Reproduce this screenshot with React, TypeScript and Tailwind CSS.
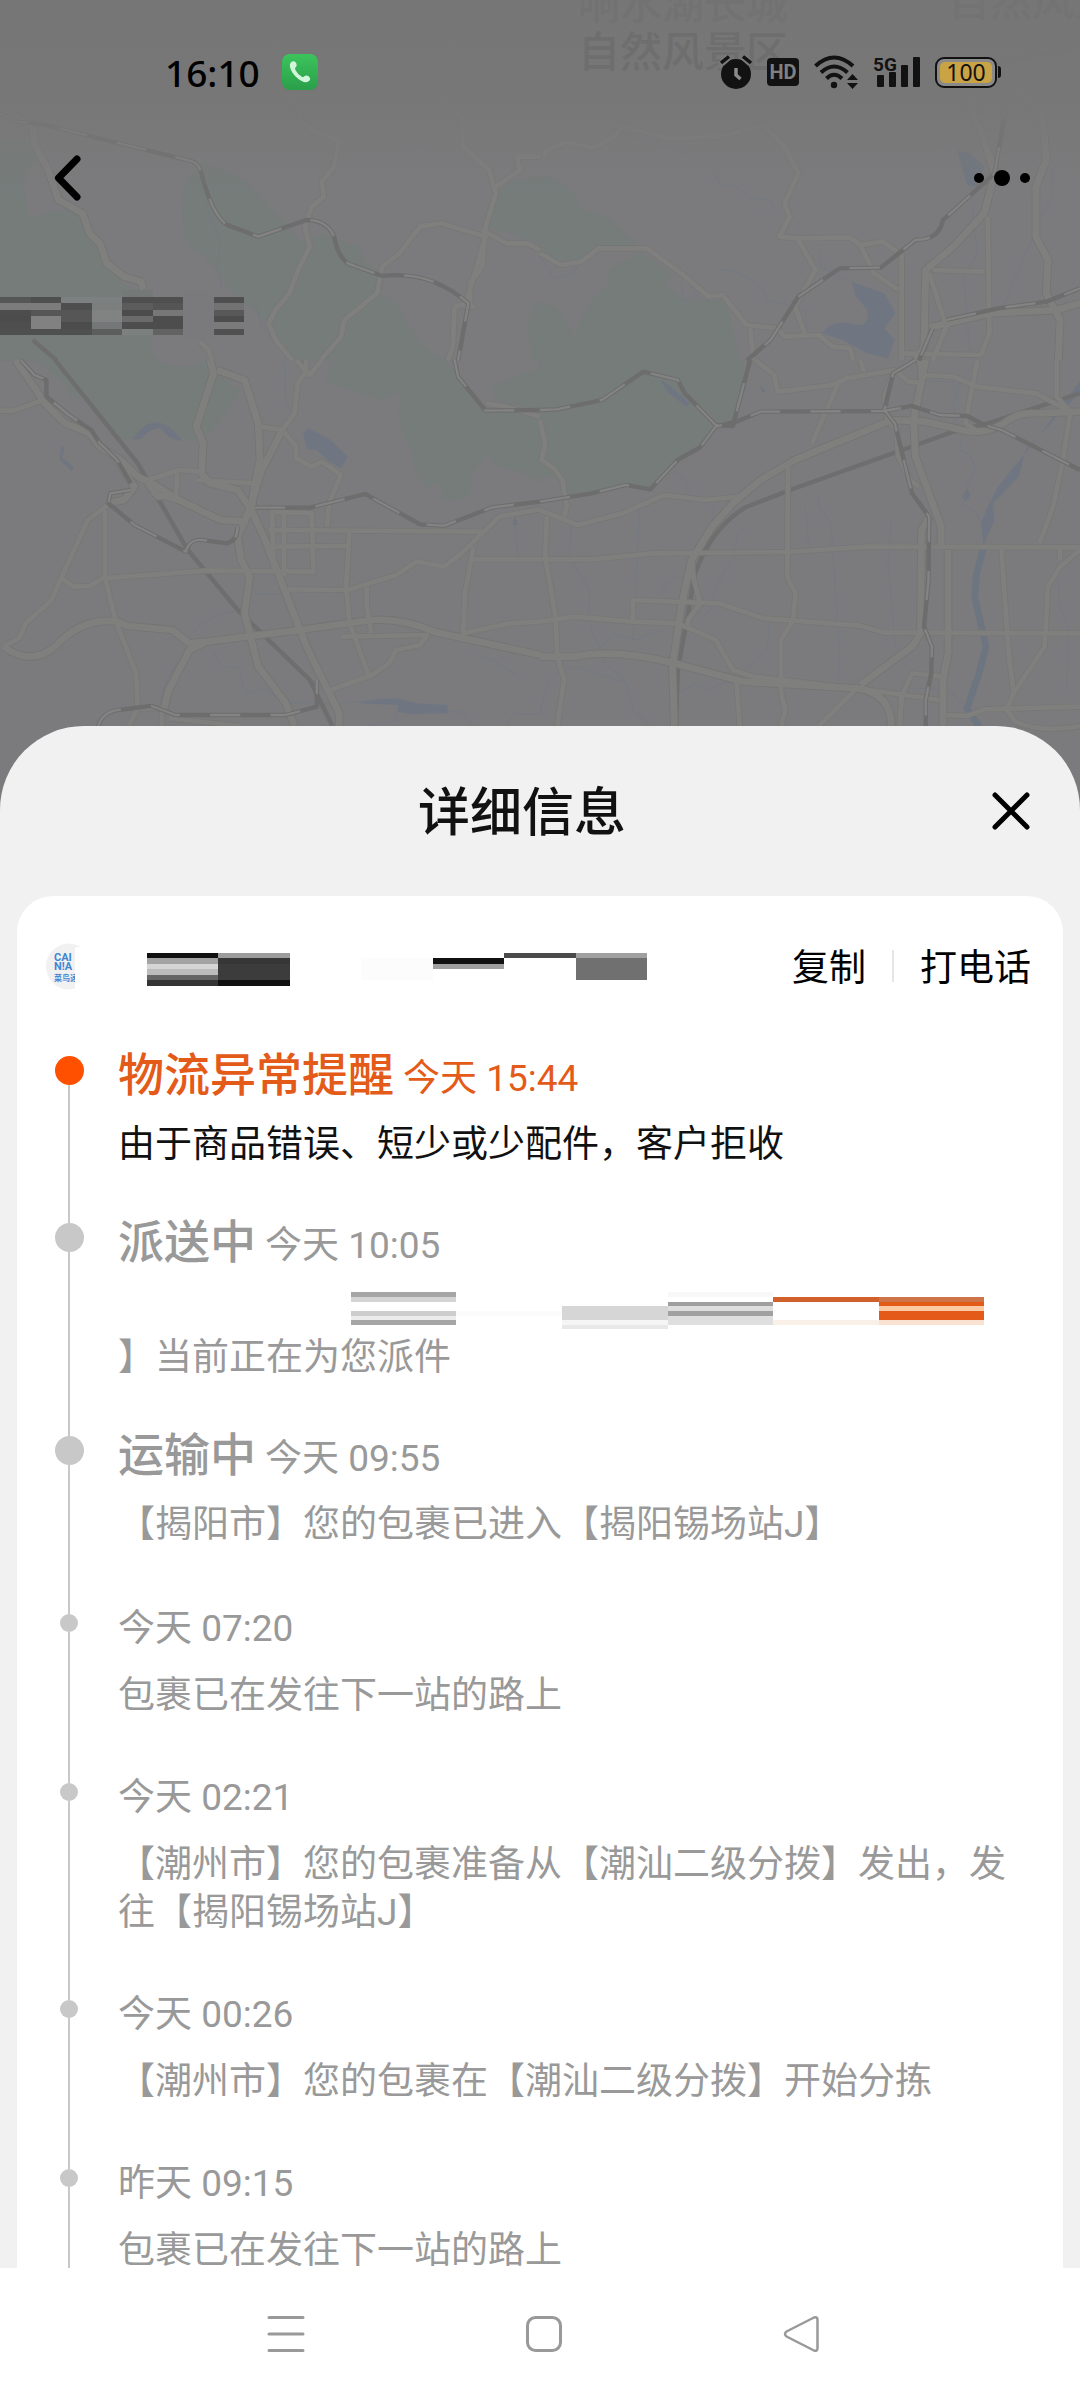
import type { ReactNode } from "react";

/* ---------- Map backdrop ---------- */

type Tile = {
  transform: string;
  parks: string[];
  lakes: string[];
  streams: string[];
  rivers: string[];
  minor: string[];
  major: string[];
  lines: string[];
  rails: string[];
};

const tiles: Tile[] = [
  {
    transform: "scale(0.3444 0.3333)",
    parks: [
      "M0 415Q60 410 100 440L110 480Q60 520 75 600Q80 670 110 650Q190 610 245 650L265 720L310 790L355 850L400 870L445 900L445 1010Q430 1060 460 1082L0 1082Z",
      "M530 600Q525 560 585 490Q700 520 740 570L800 640L870 720L900 720L940 700Q1020 740 1040 735L1060 780L1110 830L1100 880Q1150 900 1180 960Q1220 1040 1290 1082L860 1082L780 970L700 900L660 860Q610 780 580 760Q520 740 530 600Z",
      "M1570 530Q1450 530 1440 600L1410 680L1570 730Z",
      "M1570 900Q1530 920 1535 1000L1545 1082L1570 1082Z",
    ],
    lakes: [],
    streams: ["M595 610L640 720L630 800L645 870", "M1180 410L1200 450L1280 410", "M710 910L745 920L760 980L820 1050L830 1080"],
    rivers: [],
    minor: [
      "M790 90L800 200L820 290L865 320L870 350L905 390L985 420L970 500L935 545L940 590L905 620L885 680L900 740L870 800L840 880L800 930L780 970L800 1020L850 1082",
      "M1325 90L1300 180L1265 220L1270 290L1340 350L1345 440L1420 510L1440 580L1410 680L1400 800L1365 850L1365 910L1320 920L1315 1040L1300 1082",
      "M1568 470L1500 470L1510 510L1440 560",
      "M1380 920L1350 920L1410 710L1280 670L1220 680L1160 760L1110 800L1095 880L1000 960L990 1010L930 1082",
      "M1400 690L1470 730L1530 730L1568 750",
      "M580 1025L605 1050L615 1082",
    ],
    major: ["M0 320L95 380L100 430L140 510L170 600L240 640L260 700L290 730L310 790L360 830L410 845L415 870"],
    lines: ["M95 1020L165 1082"],
    rails: [
      "M0 340L50 365L120 372L550 482Q580 485 590 540Q620 650 660 675L750 710L890 660Q950 660 970 710Q985 790 1030 798L1110 828Q1250 810 1360 910L1330 1082",
    ],
  },
  {
    transform: "translate(540 0) scale(0.3444 0.3333)",
    parks: [
      "M0 525Q60 530 110 600Q120 640 200 650L280 730L270 750L200 745L130 770L60 800L0 760Z",
      "M290 755L310 770L385 820L360 850L420 900L490 900L540 905L560 980L580 1082L-2 1082L-2 915Q40 900 60 940L100 1010Q110 960 150 900L200 850Q180 800 250 780Z",
    ],
    lakes: [
      "M905 845L1000 880L1032 940L1000 985L1030 1020L1010 1075L950 1060L880 1020L820 1000Q840 960 900 970Q960 990 950 930L915 885Z",
      "M1210 450L1250 460L1290 500L1270 560L1240 555Z",
    ],
    streams: [
      "M240 400L380 440L500 500L520 550L570 560L610 595L670 600Q690 640 650 640",
      "M1120 410L1140 395L1190 460",
      "M1490 480L1485 600L1450 660L1345 920",
      "M520 810Q560 800 640 860L660 900L770 930L775 1000L830 1000",
      "M1255 620L1270 760L1230 830L1250 1080",
      "M0 770L40 835L90 825L130 770",
      "M810 730L815 800L905 845",
      "M410 840L415 900L440 900L450 880L490 905",
    ],
    rivers: [],
    minor: [
      "M10 470L20 450L80 425L150 445L210 415L240 380L370 415L520 410L650 375L710 440L750 520L710 610L725 650L695 710L750 715L900 712L930 735L995 725L1050 765L1050 1082",
      "M750 720L800 810L740 920L770 1005",
      "M0 760L60 795L120 785L170 745L310 745L410 820L490 890L530 885L600 975L690 985L710 1010L810 1005L850 1040L900 1045L910 1082",
      "M930 735L970 820L1040 870",
      "M610 985L620 1082",
      "M1140 810L1290 815",
      "M1130 980L1180 970",
      "M1050 1060L1280 1065L1305 1000L1300 650",
      "M1140 1082L1180 980L1130 820",
    ],
    major: [
      "M1255 270Q1240 330 1280 390L1320 520L1290 640L1200 740L1120 810L1115 1040L1090 1082",
      "M1350 260Q1440 290 1460 350L1470 480L1440 560L1440 710L1475 780L1470 880L1510 960L1505 1082",
      "M1140 980L1310 940L1500 930L1568 910",
    ],
    lines: ["M1350 185L1550 145"],
    rails: [
      "M1330 270L1350 340L1320 520L1170 660Q1160 720 1090 720L990 803L870 805L750 890L670 1020L600 1082",
      "M1180 960L1330 925L1470 905L1568 865",
      "M1140 985L1100 1082",
    ],
  },
  {
    transform: "translate(0 360) scale(0.3444 0.3333)",
    parks: [
      "M90 -2L445 -2Q520 40 600 0L620 40L700 90Q640 200 590 230L560 240Q530 245 510 215Q450 160 390 235L360 240Q300 190 240 115L205 110L180 60Z",
      "M965 -2L1290 -2L1330 40L1400 140L1570 150V370L1500 330Q1430 330 1415 280Q1395 310 1370 340L1365 400Q1320 440 1285 415L1280 370Q1250 370 1240 390Q1200 340 1190 260Q1150 200 1160 100L1110 120L945 65Z",
      "M1570 20L1425 80L1440 120L1570 150Z",
    ],
    lakes: [
      "M385 238Q450 135 530 243Q490 240 465 205Q430 205 410 238Z",
      "M880 220L895 205L960 240L1010 290L990 325L950 300L920 270L890 268Z",
      "M178 255Q195 270 178 290L215 322L208 334L172 298Z",
      "M1040 1030L1090 1018L1150 1015L1210 1030L1300 1035V1060L1190 1062L1155 1055V1035Z",
      "M1495 470L1505 495L1488 495Z",
    ],
    streams: [
      "M615 870L645 920L695 920L705 980L725 1000L760 985L800 1010",
      "M840 1028L1000 1028L1100 1020",
      "M1155 1050L1150 1080L1080 1098",
      "M1300 1055L1340 1055L1375 1098",
      "M1470 1095L1495 1062L1568 1062",
      "M1495 495L1505 590",
      "M560 820Q590 770 680 755",
      "M530 890Q470 960 465 1040",
      "M1380 885L1430 900L1500 945",
      "M740 703L820 703",
      "M825 0L830 130L850 160",
    ],
    rivers: [],
    minor: [
      "M0 152L40 152L120 122",
      "M890 0L885 40L865 70L855 160L820 210L755 200",
      "M860 0L900 45L935 0",
      "M820 210L860 260L860 295L905 320L935 305L990 345L955 430L950 500",
      "M320 430L255 480L180 650L150 720L75 790L55 835L10 860",
      "M305 450L305 650L335 780L395 940L400 1040L375 1098",
      "M180 655L215 680L260 678L300 655L600 632L910 635L905 460L790 455L795 640",
      "M825 460V650",
      "M780 510L1400 515",
      "M800 560L1010 558",
      "M1015 510L1005 680L1015 790L1070 945",
      "M835 688L1010 690L1150 645L1210 605L1290 620L1340 580L1450 470L1568 448",
      "M1370 598L1568 598",
      "M1375 560L1350 700L1345 820L1480 790L1568 785",
      "M1065 680L1065 740L1078 820",
      "M990 830L1240 825L1220 855L1150 870L1130 910L1080 945L960 990",
      "M515 340L510 420L440 400",
      "M430 360L520 330L580 335",
      "M570 360L740 370",
      "M1410 130L1470 140L1568 170",
      "M400 1045L480 1045",
      "M470 1050L470 1098",
      "M490 1075L700 1098",
    ],
    major: [
      "M45 0L105 90L130 130L190 190L260 220L290 260L350 300L400 350L450 375L510 415L640 480L720 485",
      "M610 0L620 40L570 200L590 250L585 340L610 370L690 390L730 450L770 540L860 780L890 860L985 1060V1098",
      "M630 30L710 60L750 190L755 300L735 400L730 470",
      "M820 210L760 330L720 460L690 530L700 600L725 650L710 760L725 820L750 920L830 1030L855 1098",
      "M340 300L390 380L360 420L310 430",
      "M10 860Q90 920 160 860Q240 770 340 785L370 798L500 810L550 850L600 845L870 810L1080 780Q1170 775 1260 815L1568 885",
      "M600 845L550 870L490 990L475 1050",
      "M430 370L460 410L500 405",
    ],
    lines: ["M160 0L400 310L545 570L690 750L900 960L965 1098"],
    rails: [
      "M60 0L100 45L135 60L135 110L200 165L265 210L290 250L340 300L380 370",
      "M740 443L900 443L1060 402L1220 493L1290 497L1430 442L1568 425",
      "M380 390L320 400L315 430L390 495L540 575Q550 530 600 542L660 550Q690 540 690 500",
      "M285 1098Q300 1050 360 1048L440 1038L510 1065L830 1065L920 1040L920 960",
      "M1320 0L1330 50L1410 152L1568 150",
    ],
  },
  {
    transform: "translate(540 360) scale(0.3444 0.3333)",
    parks: [
      "M-2 -2L585 -2L600 80L565 180L510 200L460 260L400 300L310 385L240 370L150 400L80 405L65 360L-2 345Z",
    ],
    lakes: [
      "M1570 60L1440 240L1330 380L1300 440L1280 490L1288 555L1320 480L1315 430L1390 350L1410 270L1520 150L1570 95Z",
      "M350 60L380 80L435 130L425 140L370 95Z",
      "M640 75L655 95L645 98Z",
      "M1240 385L1250 405L1235 425L1225 410Z",
    ],
    streams: [
      "M90 500L85 590L145 690L140 780L170 860L180 900L250 970L270 1050L320 1098",
      "M0 1060L25 960L80 920L140 930L250 970",
      "M290 430L270 830",
      "M805 400L810 440L845 490L870 880L865 965",
      "M600 500Q560 520 570 580L510 680L500 740L470 780",
      "M1020 480L1010 600L1030 850L1060 920",
      "M665 790L660 870L600 930",
      "M350 700Q370 650 430 650",
      "M170 870L210 820L280 840L350 810",
      "M400 1000L450 970L480 990L560 960",
      "M1225 220L1220 270Q1270 290 1260 340L1240 380L1230 430L1270 465L1285 490",
      "M1120 63L1200 65L1205 190",
      "M1250 30L1210 80L1210 130",
      "M1180 980L1240 1050",
      "M1080 985L1170 985",
      "M1505 660L1510 740L1535 800L1530 1000",
      "M770 440L780 560",
      "M390 330L430 370V400",
      "M505 430L500 480",
    ],
    rivers: ["M1290 555L1268 640L1262 710L1282 800L1295 860L1275 940L1240 1045L1275 1100"],
    minor: [
      "M0 180L15 250L5 300L40 325L65 360L78 440L70 470",
      "M0 450L110 495L240 460L360 405L480 420L580 410L620 380",
      "M20 470L15 590L45 770L50 890L70 960L50 1098",
      "M0 598L150 598L330 580L720 576L950 560L1568 562",
      "M0 785L100 770L270 785L400 790L510 840L560 930L620 950L910 985",
      "M270 785V720L520 730L650 775L930 797L1000 818L1568 820",
      "M720 310L718 650L742 700L735 780L700 840L700 1000L712 1050L700 1098",
      "M570 950L580 1098",
      "M625 0L680 45L690 95L850 75L890 55L1030 30L1070 65L1100 68",
      "M870 60L790 250",
      "M930 0L940 35",
      "M1120 45L1200 50L1270 80L1440 100L1540 155",
      "M1270 0L1235 190L1270 215",
      "M1500 0L1500 110L1540 155L1520 290L1490 440L1450 550",
      "M1340 565L1360 870L1375 1000L1355 1050L1380 1085Q1450 1120 1568 1098",
      "M1568 570L1510 620L1475 680L1465 860L1375 1000",
      "M1510 562V600",
      "M1180 1065L1240 1068L1290 1048L1568 1040",
      "M1025 40L1000 110L1010 180L1035 210L1040 290L1075 360L1100 380",
      "M1160 1020L920 985L810 1098",
      "M1045 1098L1050 1010L1080 940L1170 950",
      "M440 580L445 650L465 730L430 780L430 800",
    ],
    major: [
      "M390 1098L385 920L410 740L440 600L500 500L560 430L640 360L740 300L820 265L940 215L1020 180L1120 185L1250 215Q1310 220 1360 180Q1400 155 1440 160L1568 155",
      "M0 890L100 890Q220 865 390 910L590 965L920 985Q1020 1000 1020 1098",
      "M1120 0L1085 180L1090 290L1140 430L1165 500V560",
      "M1105 0L1110 60",
      "M1130 470L1108 510L1105 820L1080 860L930 975",
      "M1185 570V880L1170 960V1098",
    ],
    lines: ["M1568 100L1300 190L1200 215L740 385L600 440Q500 500 450 640L430 760L400 930L395 1098"],
    rails: [
      "M0 150L50 148L180 120L300 35L400 60L420 100L510 195L560 198L610 0",
      "M0 425L150 400L250 375L320 388L400 300L465 262L510 200L570 185L640 155L1000 153L1080 138L1160 165L1240 168L1290 195L1340 210L1568 330",
      "M1090 0L1025 40L1000 150L1030 190L1080 400L1130 470L1128 660L1115 800L1138 860L1136 940L1120 1020V1098",
    ],
  },
];

function MapBackdrop() {
  const layer = (key: keyof Tile, props: Record<string, string | number>) =>
    tiles.map((t) => (
      <g key={t.transform} transform={t.transform} {...props}>
        {(t[key] as string[]).map((d) => (
          <path key={d} d={d} />
        ))}
      </g>
    ));
  const line = { fill: "none", strokeLinejoin: "round", strokeLinecap: "butt" };
  return (
    <svg
      aria-hidden="true"
      className="absolute inset-x-0 top-0 h-[820px] w-full"
      viewBox="0 0 1080 820"
      preserveAspectRatio="xMidYMin slice"
    >
      <defs>
        <linearGradient id="topFade" x1="0" y1="0" x2="0" y2="1">
          <stop offset="0" stopColor="#767676" />
          <stop offset="0.55" stopColor="#777777" stopOpacity="0.9" />
          <stop offset="1" stopColor="#7a7a7b" stopOpacity="0" />
        </linearGradient>
      </defs>
      <rect width="1080" height="820" fill="#7b7b7d" />
      {layer("parks", { fill: "#757c7a" })}
      {layer("lakes", { fill: "#6f7681" })}
      {layer("streams", { ...line, stroke: "#747982", strokeWidth: 3 })}
      {layer("rivers", { ...line, stroke: "#6d7680", strokeWidth: 20 })}
      {layer("lines", { ...line, stroke: "#6e6e6e", strokeWidth: 13 })}
      {layer("minor", { ...line, stroke: "#767676", strokeWidth: 18 })}
      {layer("major", { ...line, stroke: "#747474", strokeWidth: 25 })}
      {layer("minor", { ...line, stroke: "#7f7f7e", strokeWidth: 14 })}
      {layer("major", { ...line, stroke: "#7f7f7e", strokeWidth: 20 })}
      {layer("rails", { ...line, stroke: "#6d6d6d", strokeWidth: 13 })}
      {layer("rails", { ...line, stroke: "#838383", strokeWidth: 7, strokeDasharray: "88 88" })}
      <rect width="1080" height="200" fill="url(#topFade)" />
      <g fontFamily='"Noto Sans CJK SC", sans-serif' fontSize="42" fontWeight="500">
        <text x="578" y="19" fill="#727272">响水湖长城</text>
        <text x="578" y="67" fill="#6e6e6e">自然风景区</text>
        <text x="948" y="16" fill="#737373">自然风景</text>
      </g>
      <Pixels
        blocks={[
          [122, 290, 31, 7, "#747978"],
          [0, 297, 31, 6, "#565656"], [31, 297, 30, 6, "#4f4f4f"], [61, 297, 61, 6, "#7d8080"], [122, 297, 61, 6, "#4f4f4f"], [214, 297, 30, 6, "#4f4f4f"],
          [0, 303, 61, 7, "#7c7c7c"], [61, 303, 31, 7, "#4e4e4e"], [92, 303, 30, 7, "#7a7f7e"], [122, 303, 31, 7, "#5c5c5c"], [153, 303, 30, 7, "#555555"], [214, 303, 30, 7, "#727272"],
          [0, 310, 31, 6, "#4d4d4d"], [31, 310, 61, 6, "#565656"], [92, 310, 30, 6, "#818383"], [122, 310, 31, 6, "#4c4c4c"], [153, 310, 30, 6, "#777777"], [214, 310, 30, 6, "#585858"],
          [0, 316, 31, 6, "#4c4c4c"], [31, 316, 30, 6, "#818181"], [61, 316, 31, 6, "#565656"], [92, 316, 30, 6, "#818383"], [122, 316, 31, 6, "#6b6b6b"], [153, 316, 30, 6, "#4d4d4d"], [214, 316, 30, 6, "#4c4c4c"],
          [0, 322, 31, 7, "#4e4e4e"], [31, 322, 30, 7, "#818181"], [61, 322, 31, 7, "#4c4c4c"], [92, 322, 30, 7, "#747777"], [122, 322, 61, 7, "#4d4d4d"], [214, 322, 30, 7, "#7a7a7a"],
          [0, 329, 92, 6, "#4f4f4f"], [92, 329, 30, 6, "#5b5e5d"], [122, 329, 31, 6, "#7c8180"], [153, 329, 30, 6, "#626262"], [214, 329, 30, 6, "#505050"],
          [183, 290, 31, 50, "#7a7a7d"],
        ]}
      />
    </svg>
  );
}

type Block = [x: number, y: number, width: number, height: number, fill: string];

function Pixels({ blocks }: { blocks: Block[] }) {
  return (
    <g shapeRendering="crispEdges">
      {blocks.map(([x, y, width, height, fill]) => (
        <rect key={`${x}-${y}`} x={x} y={y} width={width} height={height} fill={fill} />
      ))}
    </g>
  );
}

/* ---------- Status bar ---------- */

function StatusBar() {
  return (
    <div className="relative flex h-36 items-center justify-between pr-[79px] pl-[165px]">
      <div className="flex items-center gap-[22px]">
        <time className="font-['Noto_Sans',sans-serif] text-[37px] leading-none font-medium text-black">16:10</time>
        <svg viewBox="0 0 36 36" className="size-9" aria-label="通话">
          <defs>
            <linearGradient id="callGreen" x1="0" y1="0" x2="0" y2="1">
              <stop offset="0" stopColor="#3cc45c" />
              <stop offset="1" stopColor="#2a9f49" />
            </linearGradient>
          </defs>
          <rect width="36" height="36" rx="8" fill="url(#callGreen)" />
          <path
            d="M9.500 7.800Q12 6.200 13.800 8.600Q15.800 11.600 13.400 13.600Q12.600 14.600 13.400 16Q15.600 20.200 19.800 22.800Q21 23.600 22 22.600Q24.400 20.600 27 22.600Q29 24.600 27.400 26.800Q24.600 29.600 19.600 27Q12.400 23.200 9 16Q6.400 10.400 9.500 7.800Z"
            fill="#d3f5dc"
          />
        </svg>
      </div>
      <div className="flex items-center gap-[15px] text-[#121212]">
        <svg viewBox="0 0 32 34" className="h-[34px] w-8" aria-label="闹钟">
          <circle cx="16" cy="19" r="15" fill="currentColor" />
          <path d="M1.500 8L9 1.500M30.500 8L23 1.500" stroke="#7a7a7a" strokeWidth="7" />
          <path d="M1 8L9 1.500M31 8L23 1.500" stroke="currentColor" strokeWidth="3.500" />
          <path d="M16 13V20L20.500 24" stroke="#8a8a8a" strokeWidth="3.500" fill="none" />
        </svg>
        <span className="flex h-7 w-8 items-center justify-center rounded bg-[#121212] font-[Roboto,sans-serif] text-[20px] leading-none font-bold text-[#808080]">
          HD
        </span>
        <svg viewBox="0 0 44 34" className="h-[34px] w-11" aria-label="无线网络">
          <g fill="none" stroke="currentColor" strokeWidth="4">
            <path d="M1.500 11Q20 -6 39 11" />
            <path d="M7 17.500Q20 5.500 33.500 17.500" />
            <path d="M12.500 23.500Q20 16 28 23.500" />
          </g>
          <circle cx="20" cy="30" r="3.200" fill="currentColor" />
          <path d="M33 25L38.500 19L44 25ZM33 28H44L38.500 34Z" fill="currentColor" />
        </svg>
        <svg viewBox="0 0 47 34" className="h-[34px] w-[47px]" aria-label="5G信号">
          <text x="0" y="16" fontFamily="Roboto, sans-serif" fontSize="19" fontWeight="700" fill="currentColor">
            5G
          </text>
          <g fill="currentColor">
            <rect x="4" y="20" width="7" height="12" rx="1" />
            <rect x="16" y="17" width="7" height="15" rx="1" />
            <rect x="28" y="10" width="7" height="22" rx="1" />
            <rect x="40" y="2" width="7" height="30" rx="1" />
          </g>
        </svg>
        <div className="flex items-center gap-px">
          <div className="rounded-[9px] border-2 border-[#121212] bg-[#8a8a8a] p-[3px]">
            <div className="flex h-[21px] w-[52px] items-center justify-center rounded-[5px] bg-[#c9a344] font-['Noto_Sans',sans-serif] text-[23px] leading-none text-[#121212]">
              100
            </div>
          </div>
          <div className="h-3 w-[3px] rounded-r bg-[#121212]" />
        </div>
      </div>
    </div>
  );
}

/* ---------- Timeline ---------- */

type Entry = {
  status?: string;
  time: string;
  lines: ReactNode;
  active?: boolean;
  endOfStage?: boolean;
};

const hiddenAddress = (
  <svg viewBox="0 0 912 46" className="block h-[46px] w-full" preserveAspectRatio="xMinYMin meet" aria-label="已隐藏的内容">
    <Pixels
      blocks={[
        [233, 4, 105, 5, "#a6a6a6"], [233, 9, 105, 5, "#d4d4d4"], [233, 23, 105, 5, "#cdcdcd"], [233, 28, 105, 4, "#ececec"], [233, 32, 105, 5, "#a6a6a6"],
        [338, 23, 106, 5, "#fbfbfb"],
        [444, 18, 106, 14, "#d6d6d6"], [444, 32, 106, 5, "#f5f5f5"], [444, 37, 106, 4, "#e8e8e8"],
        [550, 4, 105, 5, "#f8f8f8"], [550, 14, 105, 4, "#9f9f9f"], [550, 18, 105, 5, "#dedede"], [550, 23, 105, 5, "#a1a1a1"], [550, 28, 105, 9, "#dfdfdf"],
        [655, 9, 106, 5, "#d1602a"], [655, 32, 106, 5, "#f9f0e8"],
        [761, 9, 105, 5, "#cd7548"], [761, 14, 105, 4, "#e35a19"], [761, 18, 105, 5, "#fbc9a4"], [761, 23, 105, 9, "#e35a19"], [761, 32, 105, 5, "#f9e2d2"],
      ]}
    />
  </svg>
);

const entries: Entry[] = [
  { status: "物流异常提醒", time: "今天 15:44", lines: "由于商品错误、短少或少配件，客户拒收", active: true },
  {
    status: "派送中",
    time: "今天 10:05",
    lines: (
      <>
        {hiddenAddress}
        】当前正在为您派件
      </>
    ),
  },
  { status: "运输中", time: "今天 09:55", lines: "【揭阳市】您的包裹已进入【揭阳锡场站J】", endOfStage: true },
  { time: "今天 07:20", lines: "包裹已在发往下一站的路上" },
  { time: "今天 02:21", lines: "【潮州市】您的包裹准备从【潮汕二级分拨】发出，发往【揭阳锡场站J】" },
  { time: "今天 00:26", lines: "【潮州市】您的包裹在【潮汕二级分拨】开始分拣" },
  { time: "昨天 09:15", lines: "包裹已在发往下一站的路上" },
];

function TimelineItem({ entry }: { entry: Entry }) {
  const { status, time, lines, active, endOfStage } = entry;
  const bottom = !status ? "pb-[54px]" : endOfStage ? "pb-14" : "pb-[46px]";
  return (
    <li className="flex">
      <div className="flex w-[30px] shrink-0 flex-col items-center">
        <span className={`w-[2px] shrink-0 ${status ? "h-2" : "h-[9px]"} ${active ? "" : "bg-[#c8c8c8]"}`} />
        <span
          className={`shrink-0 rounded-full ${status ? "size-[29px]" : "size-[18px]"} ${active ? "bg-[#ff5000]" : "bg-[#c8c8c8]"}`}
        />
        <span className="w-[2px] flex-1 bg-[#c8c8c8]" />
      </div>
      <div className={`min-w-0 flex-1 pl-[34px] ${bottom} ${active ? "text-[#e35a19]" : "text-[#999999]"}`}>
        <div className={`flex items-baseline gap-[9px] ${status ? "h-[54px] leading-[54px]" : "h-12 leading-[48px]"}`}>
          {status && <h2 className="text-[46px] font-medium">{status}</h2>}
          <time>{time}</time>
        </div>
        <div className={`mt-[19px] leading-[48px] ${active ? "text-[#111111]" : ""}`}>{lines}</div>
      </div>
    </li>
  );
}

/* ---------- Screen ---------- */

export default function App() {
  return (
    <div className="relative flex h-screen flex-col overflow-hidden bg-[#7b7b7d] font-[Roboto,'Noto_Sans_CJK_SC',sans-serif] text-[37px] [text-spacing-trim:space-all]">
      <MapBackdrop />
      <StatusBar />
      <header className="relative flex h-[68px] shrink-0 items-center justify-between px-[50px]">
        <button type="button" aria-label="返回">
          <svg viewBox="0 0 36 48" className="h-12 w-9" fill="none" stroke="#000" strokeWidth="7" strokeLinecap="round" strokeLinejoin="round">
            <path d="M27 5L8.500 24L27 43" />
          </svg>
        </button>
        <button type="button" aria-label="更多" className="flex items-center gap-[10px]">
          <span className="size-[10px] rounded-full bg-black" />
          <span className="size-4 rounded-full bg-black" />
          <span className="size-[10px] rounded-full bg-black" />
        </button>
      </header>
      <div className="h-[514px] shrink-0" />

      <section className="relative flex min-h-0 flex-1 flex-col overflow-hidden rounded-t-[84px] bg-[#f1f1f1]">
        <div className="flex h-[170px] shrink-0 items-center pr-12 pl-[54px]">
          <h1 className="flex-1 pt-1.5 text-center text-[52px] leading-none font-medium text-[#111111]">详细信息</h1>
          <button type="button" aria-label="关闭">
            <svg viewBox="0 0 42 42" className="size-[42px]" fill="none" stroke="#000" strokeWidth="5" strokeLinecap="round">
              <path d="M5 5L37 37M37 5L5 37" />
            </svg>
          </button>
        </div>

        <div className="mx-[17px] min-h-0 flex-1 overflow-hidden rounded-t-[36px] bg-white pt-10 pr-8 pl-[29px]">
          <div className="flex h-[60px] items-center">
            <svg viewBox="0 0 612 60" className="h-[60px] w-[612px] shrink-0" aria-label="菜鸟速递">
              <path d="M35 11Q29 7.500 23 7.500A23 23 0 0 0 23 53.500Q26 53.500 29 52.500V11Z" fill="#f1f1f2" />
              <g fontFamily="Roboto, sans-serif" fontSize="11" fontWeight="700" fill="#3f86d2">
                <text x="8" y="25">CAI</text>
                <text x="8" y="34">N!A</text>
              </g>
              <text x="8" y="45" fontFamily='"Noto Sans CJK SC", sans-serif' fontSize="8" fontWeight="700" fill="#3f86d2">
                菜鸟速
              </text>
              <path d="M29 11H44V53H29Z" fill="#ffffff" />
              <Pixels
                blocks={[
                  [101, 17, 71, 5, "#111111"], [101, 22, 71, 6, "#a3a3a3"], [101, 28, 71, 5, "#d5d5d5"], [101, 33, 71, 6, "#bcbcbc"], [101, 39, 71, 5, "#656565"], [101, 44, 71, 6, "#343434"],
                  [172, 17, 72, 5, "#9c9c9c"], [172, 22, 72, 6, "#363636"], [172, 28, 72, 16, "#3c3c3c"], [172, 44, 72, 6, "#101010"],
                  [315, 22, 72, 22, "#fcfcfc"],
                  [387, 22, 71, 6, "#111111"], [387, 28, 71, 5, "#9f9f9f"],
                  [458, 17, 72, 5, "#4a4a4a"],
                  [530, 17, 71, 5, "#a0a0a0"], [530, 22, 71, 22, "#707070"],
                ]}
              />
            </svg>
            <div className="flex flex-1 items-center justify-end gap-[26px] whitespace-nowrap text-black">
              <button type="button" className="pt-1.5">复制</button>
              <span className="h-8 w-[2px] bg-[#e5e5e5]" />
              <button type="button" className="pt-1.5">打电话</button>
            </div>
          </div>
          <ol className="mt-[52px] pl-2">
            {entries.map((entry) => (
              <TimelineItem key={entry.time} entry={entry} />
            ))}
          </ol>
        </div>
      </section>

      <nav className="relative flex h-[132px] shrink-0 items-center justify-center gap-[220px] bg-white pl-2 text-[#999999]">
        <button type="button" aria-label="最近任务">
          <svg viewBox="0 0 38 38" className="size-[38px]" fill="none" stroke="currentColor" strokeWidth="3" strokeLinecap="round">
            <path d="M2 2.500H36M2 19H36M2 35.500H36" />
          </svg>
        </button>
        <button type="button" aria-label="主屏幕">
          <svg viewBox="0 0 38 38" className="size-[38px]" fill="none" stroke="currentColor" strokeWidth="3">
            <rect x="2.500" y="2.500" width="33" height="33" rx="8" />
          </svg>
        </button>
        <button type="button" aria-label="返回上一页">
          <svg viewBox="0 0 38 38" className="size-[38px]" fill="none" stroke="currentColor" strokeWidth="2.500" strokeLinejoin="round">
            <path d="M31 2.500Q34.500 1.500 34.500 5V33Q34.500 36.500 31 35.500L3.500 21.500Q0.500 19 3.500 16.500Z" />
          </svg>
        </button>
      </nav>
    </div>
  );
}
